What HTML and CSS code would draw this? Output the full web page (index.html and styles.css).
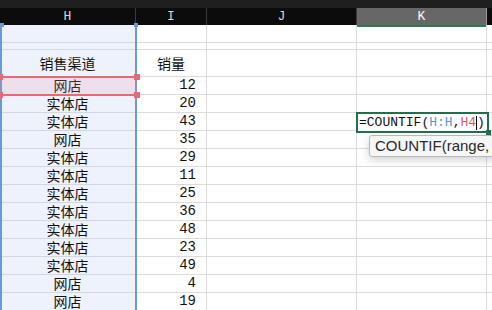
FILE: index.html
```html
<!DOCTYPE html>
<html>
<head>
<meta charset="utf-8">
<link rel="stylesheet" href="styles.css">
</head>
<body>
<div class="app">
  <div class="topbar"></div>
  <div class="colhead">
    <div class="ch">H</div>
    <div class="ch">I</div>
    <div class="ch">J</div>
    <div class="ch active">K</div>
    <div class="ch last"></div>
  </div>
  <div class="sheet">
    <div class="c h"></div><div class="c"></div><div class="c"></div><div class="c"></div><div class="c"></div>
    <div class="c h"></div><div class="c"></div><div class="c"></div><div class="c"></div><div class="c"></div>
    <div class="c h t">销售渠道</div><div class="c t">销量</div><div class="c"></div><div class="c"></div><div class="c"></div>

    <div class="c h t">网店</div><div class="c n">12</div><div class="c"></div><div class="c"></div><div class="c"></div>
    <div class="c h t">实体店</div><div class="c n">20</div><div class="c"></div><div class="c"></div><div class="c"></div>
    <div class="c h t">实体店</div><div class="c n">43</div><div class="c"></div><div class="c"></div><div class="c"></div>
    <div class="c h t">网店</div><div class="c n">35</div><div class="c"></div><div class="c"></div><div class="c"></div>
    <div class="c h t">实体店</div><div class="c n">29</div><div class="c"></div><div class="c"></div><div class="c"></div>
    <div class="c h t">实体店</div><div class="c n">11</div><div class="c"></div><div class="c"></div><div class="c"></div>
    <div class="c h t">实体店</div><div class="c n">25</div><div class="c"></div><div class="c"></div><div class="c"></div>
    <div class="c h t">实体店</div><div class="c n">36</div><div class="c"></div><div class="c"></div><div class="c"></div>
    <div class="c h t">实体店</div><div class="c n">48</div><div class="c"></div><div class="c"></div><div class="c"></div>
    <div class="c h t">实体店</div><div class="c n">23</div><div class="c"></div><div class="c"></div><div class="c"></div>
    <div class="c h t">实体店</div><div class="c n">49</div><div class="c"></div><div class="c"></div><div class="c"></div>
    <div class="c h t">网店</div><div class="c n">4</div><div class="c"></div><div class="c"></div><div class="c"></div>
    <div class="c h t">网店</div><div class="c n">19</div><div class="c"></div><div class="c"></div><div class="c"></div>
  </div>

  <div class="colsel">
    <span class="bh bh-l"></span><span class="bh bh-r"></span>
  </div>
  <div class="rowsel">
    <span class="rh rh-tl"></span><span class="rh rh-tr"></span>
    <span class="rh rh-bl"></span><span class="rh rh-br"></span>
  </div>
  <div class="editor">
    <span>=COUNTIF(</span><span class="ref-b">H:H</span><span>,</span><span class="ref-r">H4</span><span class="caret"></span><span>)</span>
    <span class="fill"></span>
  </div>
  <div class="tip">COUNTIF(range,</div>
</div>
</body>
</html>
```
FILE: styles.css
```css
html, body {
  margin: 0;
  padding: 0;
  background: #ffffff;
  overflow: hidden;
}
.app {
  position: relative;
  width: 492px;
  height: 310px;
  overflow: hidden;
  font-family: "Noto Sans CJK SC", "Liberation Sans", sans-serif;
}
.topbar {
  height: 8px;
  background: #1f1f1f;
}
.colhead {
  display: grid;
  grid-template-columns: 136px 71px 150px 130px 20px;
  height: 17px;
  background: #0c0c0c;
}
.ch {
  box-sizing: border-box;
  border-right: 1px solid #3c3c3c;
  color: #d8d8d8;
  font-family: "Liberation Mono", monospace;
  font-size: 13px;
  line-height: 17px;
  text-align: center;
}
.ch.active {
  background: #676767;
  border-right: 1px solid #9a9a9a;
  border-bottom: 2px solid #2f7a52;
  color: #ffffff;
}
.ch.last { border-right: none; }

.sheet {
  display: grid;
  grid-template-columns: 136px 71px 150px 130px 20px;
  grid-template-rows: 18px 7px 27px repeat(13, 18px);
}
.c {
  box-sizing: border-box;
  border-right: 1px solid #dcdcdc;
  border-bottom: 1px solid #dcdcdc;
  font-size: 14px;
  color: #111;
  line-height: 15px;
  white-space: nowrap;
}
.c.h {
  background: #eef2fc;
  border-bottom-color: #d3d7e2;
}
.c.t {
  display: flex;
  align-items: center;
  justify-content: center;
}
.c.n {
  text-align: right;
  padding-right: 10px;
  font-family: "Liberation Mono", monospace;
  font-size: 14px;
  line-height: 17px;
}

/* column selection overlay */
.colsel {
  position: absolute;
  left: 0;
  top: 25px;
  width: 137px;
  height: 290px;
  box-sizing: border-box;
  border-left: 2px solid #6c99d6;
  border-right: 2px solid #6c99d6;
}
.bh {
  position: absolute;
  top: -2px;
  width: 4px;
  height: 4px;
  background: #6c99d6;
}
.bh-l { left: -2px; }
.bh-r { right: -3px; }

/* row selection overlay */
.rowsel {
  position: absolute;
  left: 0;
  top: 76px;
  width: 137px;
  height: 20px;
  box-sizing: border-box;
  border-top: 2px solid #e46b75;
  border-bottom: 2px solid #e46b75;
  background: rgba(232, 140, 160, 0.18);
}
.rh {
  position: absolute;
  width: 6px;
  height: 6px;
  background: #e46b75;
}
.rh-tl { left: -3px; top: -4px; }
.rh-tr { right: -3px; top: -4px; }
.rh-bl { left: -3px; bottom: -4px; }
.rh-br { right: -3px; bottom: -4px; }

/* formula editor */
.editor {
  position: absolute;
  left: 356px;
  top: 112px;
  width: 133px;
  height: 21px;
  box-sizing: border-box;
  border: 2px solid #22704a;
  background: #fff;
  font-family: "Liberation Mono", monospace;
  font-size: 13px;
  line-height: 17px;
  color: #111;
  padding-left: 1px;
  white-space: nowrap;
  display: flex;
  align-items: center;
}
.ref-b { color: #5f94d4; }
.ref-r { color: #d0626a; }
.caret {
  display: inline-block;
  width: 1px;
  height: 14px;
  background: #000;
}
.fill {
  position: absolute;
  right: -4px;
  bottom: -4px;
  width: 5px;
  height: 5px;
  background: #22704a;
}

/* tooltip */
.tip {
  position: absolute;
  left: 369px;
  top: 135px;
  width: 150px;
  height: 22px;
  box-sizing: border-box;
  border: 1px solid #b9b9b9;
  border-radius: 3px;
  background: #f6f6f6;
  box-shadow: 0 3px 8px rgba(0, 0, 0, 0.18);
  font-family: "Liberation Sans", Arial, sans-serif;
  font-size: 15px;
  line-height: 20px;
  color: #2a2a2a;
  padding-left: 5px;
  white-space: nowrap;
}
```
